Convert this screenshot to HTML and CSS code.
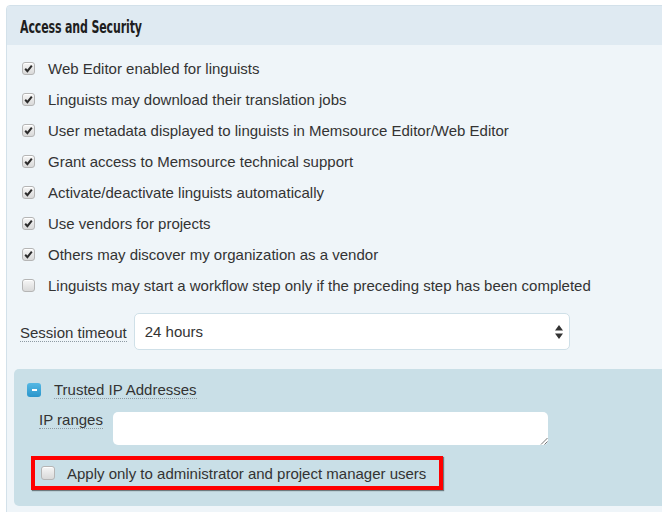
FILE: index.html
```html
<!DOCTYPE html>
<html>
<head>
<meta charset="utf-8">
<link rel="stylesheet" href="styles.css">
</head>
<body>
<div class="panel">
  <div class="panel-head"><h2 class="title">Access and Security</h2></div>
  <div class="panel-body">
    <ul class="checks">
      <li class="check-row"><span class="cb"><svg viewBox="0 0 13 13" width="13" height="13"><path d="M3.2 6.8 L5.4 9.2 L9.8 3.6" fill="none" stroke="#2b2b2b" stroke-width="2"/></svg></span>Web Editor enabled for linguists</li>
      <li class="check-row"><span class="cb"><svg viewBox="0 0 13 13" width="13" height="13"><path d="M3.2 6.8 L5.4 9.2 L9.8 3.6" fill="none" stroke="#2b2b2b" stroke-width="2"/></svg></span>Linguists may download their translation jobs</li>
      <li class="check-row"><span class="cb"><svg viewBox="0 0 13 13" width="13" height="13"><path d="M3.2 6.8 L5.4 9.2 L9.8 3.6" fill="none" stroke="#2b2b2b" stroke-width="2"/></svg></span>User metadata displayed to linguists in Memsource Editor/Web Editor</li>
      <li class="check-row"><span class="cb"><svg viewBox="0 0 13 13" width="13" height="13"><path d="M3.2 6.8 L5.4 9.2 L9.8 3.6" fill="none" stroke="#2b2b2b" stroke-width="2"/></svg></span>Grant access to Memsource technical support</li>
      <li class="check-row"><span class="cb"><svg viewBox="0 0 13 13" width="13" height="13"><path d="M3.2 6.8 L5.4 9.2 L9.8 3.6" fill="none" stroke="#2b2b2b" stroke-width="2"/></svg></span>Activate/deactivate linguists automatically</li>
      <li class="check-row"><span class="cb"><svg viewBox="0 0 13 13" width="13" height="13"><path d="M3.2 6.8 L5.4 9.2 L9.8 3.6" fill="none" stroke="#2b2b2b" stroke-width="2"/></svg></span>Use vendors for projects</li>
      <li class="check-row"><span class="cb"><svg viewBox="0 0 13 13" width="13" height="13"><path d="M3.2 6.8 L5.4 9.2 L9.8 3.6" fill="none" stroke="#2b2b2b" stroke-width="2"/></svg></span>Others may discover my organization as a vendor</li>
      <li class="check-row"><span class="cb"></span>Linguists may start a workflow step only if the preceding step has been completed</li>
    </ul>
    <div class="session-row">
      <span class="hint-label">Session timeout</span>
      <div class="select">
        <span>24 hours</span>
        <svg class="arrows" viewBox="0 0 8 14" width="8" height="14"><path d="M4 0 L8 5.5 L0 5.5 Z M0 8.5 L8 8.5 L4 14 Z" fill="#333"/></svg>
      </div>
    </div>
    <div class="trusted">
      <div class="trusted-head">
        <span class="toggle"><span class="dash"></span></span>
        <span class="hint-label">Trusted IP Addresses</span>
      </div>
      <div class="ip-row">
        <span class="hint-label">IP ranges</span>
        <div class="textarea"><svg class="grip" viewBox="0 0 8 8" width="8" height="8"><path d="M7.5 1 L1 7.5 M7.5 4.5 L4.5 7.5" stroke="#777" stroke-width="1"/></svg></div>
      </div>
      <div class="highlight">
        <span class="cb"></span>Apply only to administrator and project manager users
      </div>
    </div>
  </div>
</div>
</body>
</html>
```

FILE: styles.css
```css
html, body {
  margin: 0;
  padding: 0;
  overflow: hidden;
  background: #ffffff;
}
body {
  font-family: "Liberation Sans", Arial, sans-serif;
  font-size: 15px;
  color: #333333;
}
.panel {
  margin: 5px -30px 0 6px;
  border: 1px solid #d3e1ea;
  border-radius: 4px 0 0 0;
  background: #eff5f9;
}
.panel-head {
  height: 39px;
  background: #dfeaf2;
  display: flex;
  align-items: center;
  padding-left: 13px;
  border-radius: 3px 0 0 0;
}
.title {
  margin: 2px 0 0 0;
  font-family: "Liberation Sans Narrow", "DejaVu Sans Condensed", sans-serif;
  font-weight: bold;
  font-size: 18px;
  color: #1e1e1e;
  letter-spacing: -0.2px;
  transform: scaleX(0.68);
  transform-origin: left center;
}
.panel-body {
  padding: 13px 0 6px 13px;
}
.checks {
  list-style: none;
  margin: 0;
  padding: 0 0 0 2px;
  display: flex;
  flex-direction: column;
  gap: 10px;
}
.check-row {
  display: flex;
  align-items: center;
  line-height: 21px;
}
.cb {
  width: 13px;
  height: 13px;
  box-sizing: border-box;
  border: 1px solid #b5b5b5;
  border-radius: 3px;
  background: linear-gradient(#f6f6f6, #d9d9d9);
  margin-right: 13px;
  flex: none;
  display: inline-flex;
  box-shadow: inset 0 1px 0 #ffffff;
}
.cb svg {
  margin: -1px;
}
.session-row {
  display: flex;
  align-items: center;
  margin-top: 17px;
  gap: 7px;
}
.hint-label {
  border-bottom: 1px dotted #8e9aa3;
  line-height: 17px;
}
.session-row .hint-label {
  margin-top: 2px;
}
.select {
  width: 436px;
  height: 37px;
  box-sizing: border-box;
  border: 1px solid #cfe0e8;
  border-radius: 5px;
  background: #ffffff;
  display: flex;
  align-items: center;
  justify-content: space-between;
  padding: 0 6px 0 10px;
}
.arrows {
  margin-top: 1px;
}
.trusted {
  margin: 19px 0 0 -6px;
  background: #c9dfe7;
  border-radius: 5px 0 0 5px;
  padding: 12px 0 16px 13px;
}
.trusted-head {
  display: flex;
  align-items: center;
  gap: 13px;
}
.toggle {
  width: 14px;
  height: 14px;
  border-radius: 3px;
  background: linear-gradient(#55b8e4, #2a95cb);
  display: flex;
  align-items: center;
  justify-content: center;
}
.dash {
  width: 5px;
  height: 2px;
  background: #ffffff;
}
.ip-row {
  display: flex;
  align-items: flex-start;
  gap: 10px;
  margin: 11px 0 0 12px;
}
.ip-row .hint-label {
  margin-top: 1px;
}
.textarea {
  width: 435px;
  height: 33px;
  margin-top: 2px;
  background: #ffffff;
  border-radius: 5px;
  position: relative;
}
.grip {
  position: absolute;
  right: 0;
  bottom: 0;
}
.highlight {
  margin: 11px 0 0 4px;
  width: 412px;
  height: 34px;
  box-sizing: border-box;
  border: 4px solid #ff0000;
  box-shadow: 1px 1px 1px rgba(0, 0, 0, 0.45);
  display: flex;
  align-items: center;
  padding-left: 6px;
}
.highlight .cb {
  width: 14px;
  height: 14px;
  margin-right: 12px;
}
```
